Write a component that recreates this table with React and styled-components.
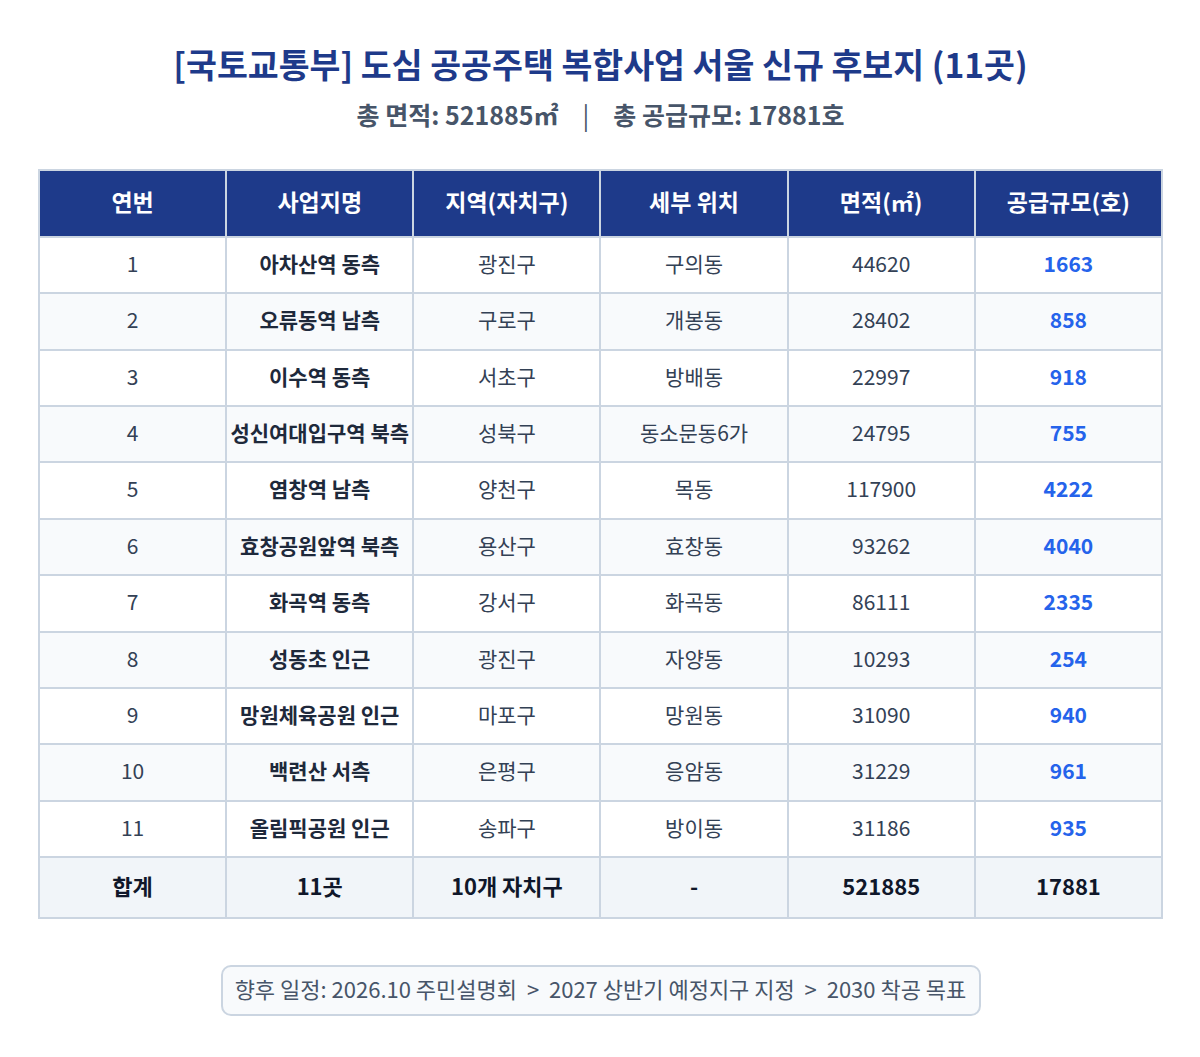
import React from "react";
import styled, { createGlobalStyle } from "styled-components";

const Global = createGlobalStyle`
  html, body { margin: 0; padding: 0; background: #ffffff; }
  body { font-family: "Noto Sans CJK KR", "Noto Sans", sans-serif; }
`;

const Page = styled.div`
  padding: 42px 37px 40px 38px;
  display: flex;
  flex-direction: column;
  align-items: center;
`;

const Title = styled.h1`
  margin: 0;
  font-size: 33.6px;
  line-height: 44px;
  font-weight: 700;
  color: #1e3a8a;
  text-align: center;
`;

const Subtitle = styled.div`
  margin-top: 13px;
  font-size: 25px;
  line-height: 30px;
  font-weight: 700;
  color: #475569;
  display: flex;
  gap: 24px;
  align-items: center;
`;

const Sep = styled.span`
  color: #475569;
  font-weight: 400;
`;

const Table = styled.table`
  margin-top: 40px;
  width: 1125px;
  border-collapse: collapse;
  table-layout: fixed;
  border: 2px solid #cbd5e1;
`;

const Th = styled.th`
  background: #1e3a8a;
  color: #ffffff;
  font-size: 23px;
  font-weight: 700;
  line-height: 27px;
  padding: 17px 4px 21px;
  border: 2px solid #cbd5e1;
  text-align: center;
`;

const Tr = styled.tr`
  background: ${(p) => (p.$alt ? "#f8fafc" : "#ffffff")};
`;

const Td = styled.td`
  font-size: 21px;
  line-height: 26.36px;
  padding: 12px 2px 16px;
  border: 2px solid #cbd5e1;
  text-align: center;
  white-space: nowrap;
  color: ${(p) => (p.$blue ? "#2563eb" : p.$bold ? "#1e293b" : "#334155")};
  font-weight: ${(p) => (p.$bold || p.$blue ? 700 : 400)};
`;

const TotalRow = styled.tr`
  background: #f1f5f9;
`;

const TotalTd = styled.td`
  font-size: 22px;
  line-height: 27px;
  padding: 14px 2px 18px;
  border: 2px solid #cbd5e1;
  text-align: center;
  font-weight: 700;
  color: #0f172a;
`;

const Footer = styled.div`
  margin-top: 46px;
  width: 760px;
  box-sizing: border-box;
  border: 2px solid #cbd5e1;
  border-radius: 10px;
  background: #f8fafc;
  padding: 8px 8px 12px;
  font-size: 22px;
  line-height: 27px;
  color: #475569;
  text-align: center;
  white-space: nowrap;
`;

const rows = [
  [1, "아차산역 동측", "광진구", "구의동", 44620, 1663],
  [2, "오류동역 남측", "구로구", "개봉동", 28402, 858],
  [3, "이수역 동측", "서초구", "방배동", 22997, 918],
  [4, "성신여대입구역 북측", "성북구", "동소문동6가", 24795, 755],
  [5, "염창역 남측", "양천구", "목동", 117900, 4222],
  [6, "효창공원앞역 북측", "용산구", "효창동", 93262, 4040],
  [7, "화곡역 동측", "강서구", "화곡동", 86111, 2335],
  [8, "성동초 인근", "광진구", "자양동", 10293, 254],
  [9, "망원체육공원 인근", "마포구", "망원동", 31090, 940],
  [10, "백련산 서측", "은평구", "응암동", 31229, 961],
  [11, "올림픽공원 인근", "송파구", "방이동", 31186, 935],
];

export default function App() {
  return (
    <>
      <Global />
      <Page>
        <Title>[국토교통부] 도심 공공주택 복합사업 서울 신규 후보지 (11곳)</Title>
        <Subtitle>
          <span>총 면적: 521885㎡</span>
          <Sep>|</Sep>
          <span>총 공급규모: 17881호</span>
        </Subtitle>
        <Table>
          <thead>
            <tr>
              <Th>연번</Th>
              <Th>사업지명</Th>
              <Th>지역(자치구)</Th>
              <Th>세부 위치</Th>
              <Th>면적(㎡)</Th>
              <Th>공급규모(호)</Th>
            </tr>
          </thead>
          <tbody>
            {rows.map((r, i) => (
              <Tr key={r[0]} $alt={i % 2 === 1}>
                <Td>{r[0]}</Td>
                <Td $bold>{r[1]}</Td>
                <Td>{r[2]}</Td>
                <Td>{r[3]}</Td>
                <Td>{r[4]}</Td>
                <Td $blue>{r[5]}</Td>
              </Tr>
            ))}
            <TotalRow>
              <TotalTd>합계</TotalTd>
              <TotalTd>11곳</TotalTd>
              <TotalTd>10개 자치구</TotalTd>
              <TotalTd>-</TotalTd>
              <TotalTd>521885</TotalTd>
              <TotalTd>17881</TotalTd>
            </TotalRow>
          </tbody>
        </Table>
        <Footer>
          향후 일정: 2026.10 주민설명회 &nbsp;&gt;&nbsp; 2027 상반기 예정지구 지정 &nbsp;&gt;&nbsp; 2030 착공 목표
        </Footer>
      </Page>
    </>
  );
}
